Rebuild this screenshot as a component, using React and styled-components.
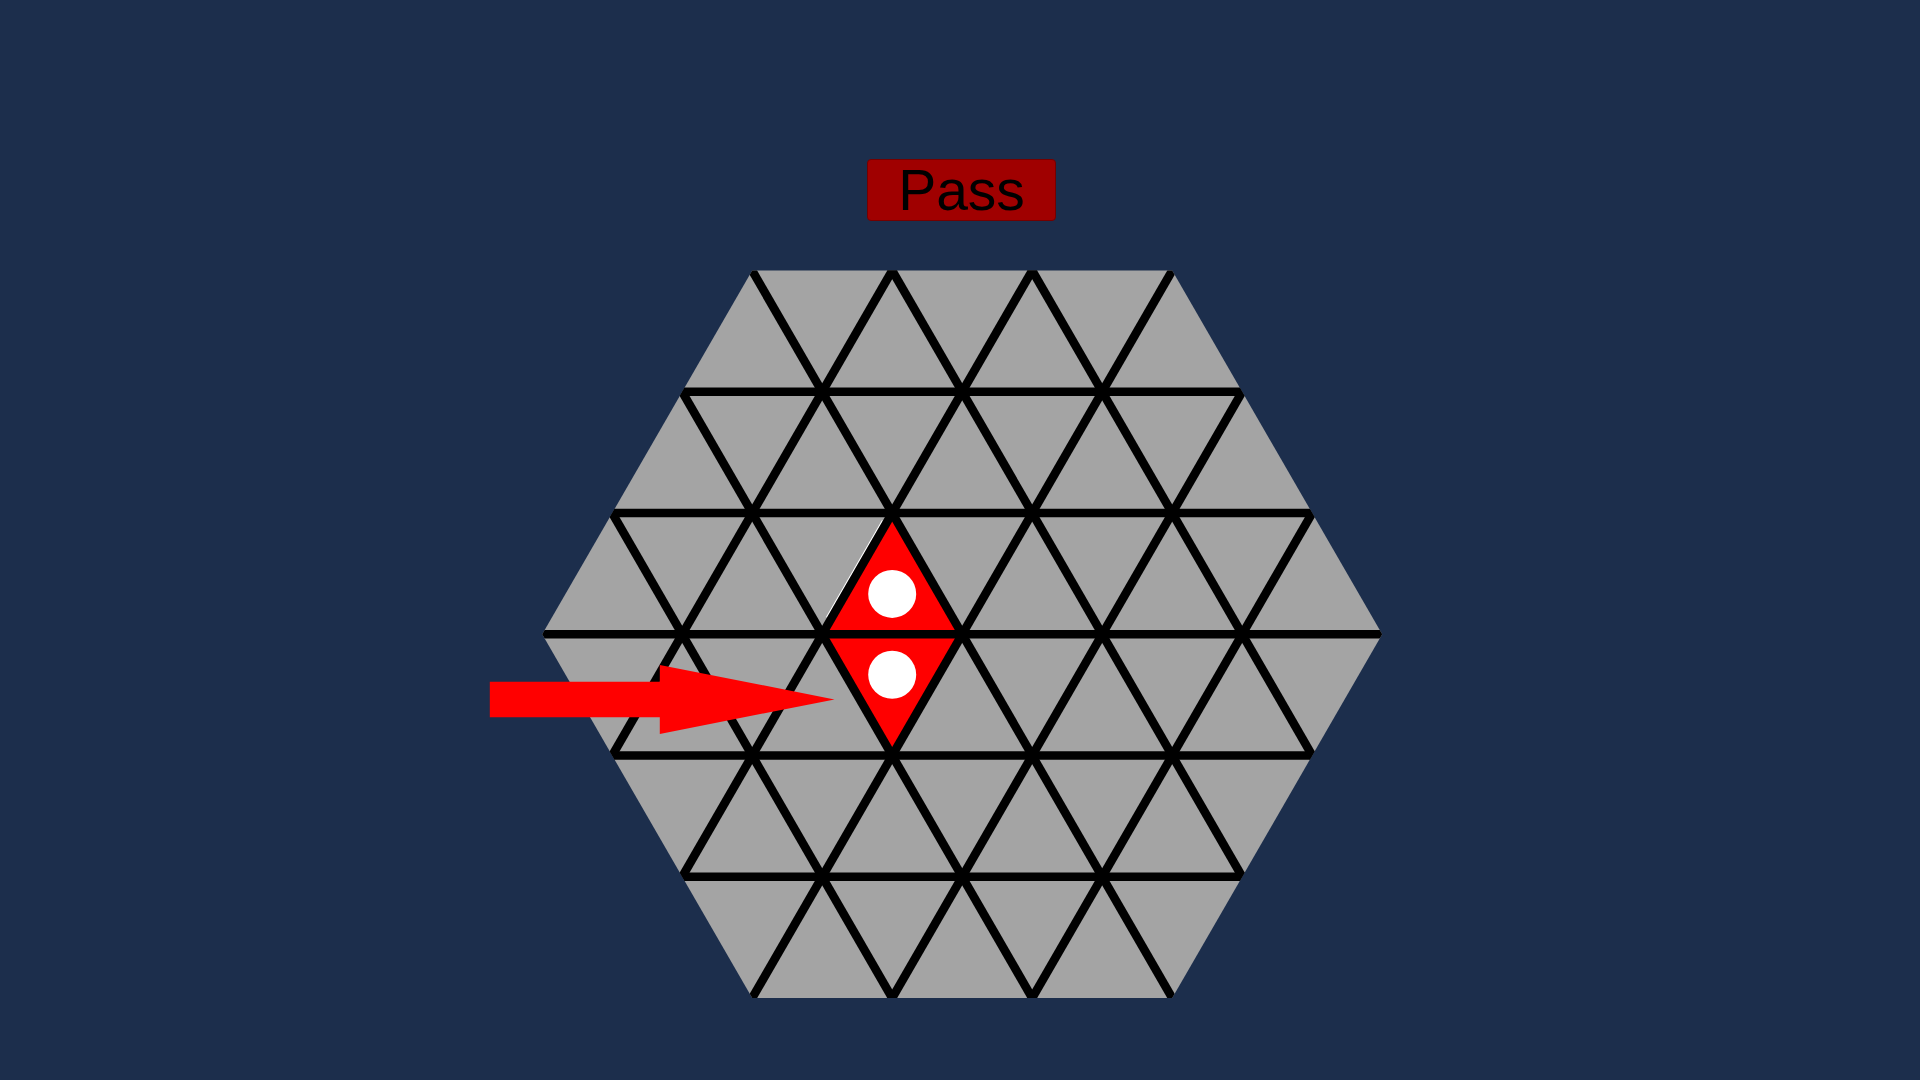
import React from "react";
import styled, { createGlobalStyle } from "styled-components";

const GlobalStyle = createGlobalStyle`
  html, body {
    margin: 0;
    padding: 0;
    background: #1c2e4c;
    overflow: hidden;
  }
  body {
    font-family: "Liberation Sans", Arial, sans-serif;
  }
`;

// board geometry (page coordinates)
const CX = 961.7;
const CY = 634.3;
const S = 140;
const H = (S * Math.sqrt(3)) / 2;

const pt = (i, j) => [CX + i * S + (j * S) / 2, CY + j * H];
const poly = (pts) => pts.map((p) => p.join(",")).join(" ");

const hexCorners = [
  pt(3, 0),
  pt(3, -3),
  pt(0, -3),
  pt(-3, 0),
  pt(-3, 3),
  pt(0, 3),
];

function gridLines() {
  const lines = [];
  for (let k = -2; k <= 2; k++) {
    // horizontal
    const [x1, y1] = pt(-5, k);
    const [x2, y2] = pt(5, k);
    lines.push({ key: "h" + k, x1, y1, x2, y2 });
    // "\" lines: i constant
    const a = pt(k, -4);
    const b = pt(k, 4);
    lines.push({ key: "d" + k, x1: a[0], y1: a[1], x2: b[0], y2: b[1] });
    // "/" lines: i + j constant
    const c = pt(k + 4, -4);
    const d = pt(k - 4, 4);
    lines.push({ key: "u" + k, x1: c[0], y1: c[1], x2: d[0], y2: d[1] });
  }
  return lines;
}

const selected = [
  [pt(0, -1), pt(-1, 0), pt(0, 0)],
  [pt(-1, 0), pt(0, 0), pt(-1, 1)],
];

const centroid = (tri) => [
  (tri[0][0] + tri[1][0] + tri[2][0]) / 3,
  (tri[0][1] + tri[1][1] + tri[2][1]) / 3,
];

// little white highlight along the upper-left edge of the upper red cell
function highlight() {
  const [ax, ay] = pt(0, -1);
  const [bx, by] = pt(-1, 0);
  const ox = -4.1;
  const oy = -2.4;
  const t0 = 0.08;
  const t1 = 0.88;
  return {
    x1: ax + (bx - ax) * t0 + ox,
    y1: ay + (by - ay) * t0 + oy,
    x2: ax + (bx - ax) * t1 + ox,
    y2: ay + (by - ay) * t1 + oy,
  };
}

const Page = styled.div`
  min-height: 100vh;
  display: flex;
  flex-direction: column;
  align-items: center;
  padding: 159px 0 0 3px;
  box-sizing: border-box;
`;

const PassButton = styled.button`
  width: 189px;
  height: 62px;
  padding: 0;
  background: #a00000;
  border: 1px solid #740000;
  border-radius: 4px;
  color: #000;
  font-family: "Liberation Sans", Arial, sans-serif;
  font-size: 57px;
  line-height: 60px;
  cursor: pointer;
`;

const Board = styled.svg`
  display: block;
  margin-top: 45px;
  width: 960px;
  height: 740px;
`;

function HexBoard() {
  const hl = highlight();
  return (
    <Board viewBox="481.5 266 960 740">
      <defs>
        <clipPath id="hexClip">
          <polygon points={poly(hexCorners)} />
        </clipPath>
      </defs>
      <polygon points={poly(hexCorners)} fill="#a4a4a4" />
      {selected.map((tri, n) => (
        <polygon key={n} points={poly(tri)} fill="#ff0000" />
      ))}
      <line {...hl} stroke="#ffffff" strokeWidth="1.2" />
      <g clipPath="url(#hexClip)" stroke="#000" strokeWidth="8.6">
        {gridLines().map(({ key, ...l }) => (
          <line key={key} {...l} />
        ))}
      </g>
      {selected.map((tri, n) => {
        const [x, y] = centroid(tri);
        return <circle key={n} cx={x} cy={y} r="24" fill="#fff" />;
      })}
      <polygon
        points="489.3,681.7 659.3,681.7 659.3,665 834,699.4 659.3,734 659.3,717.3 489.3,717.3"
        fill="#ff0000"
      />
    </Board>
  );
}

export default function App() {
  return (
    <>
      <GlobalStyle />
      <Page>
        <PassButton>Pass</PassButton>
        <HexBoard />
      </Page>
    </>
  );
}
